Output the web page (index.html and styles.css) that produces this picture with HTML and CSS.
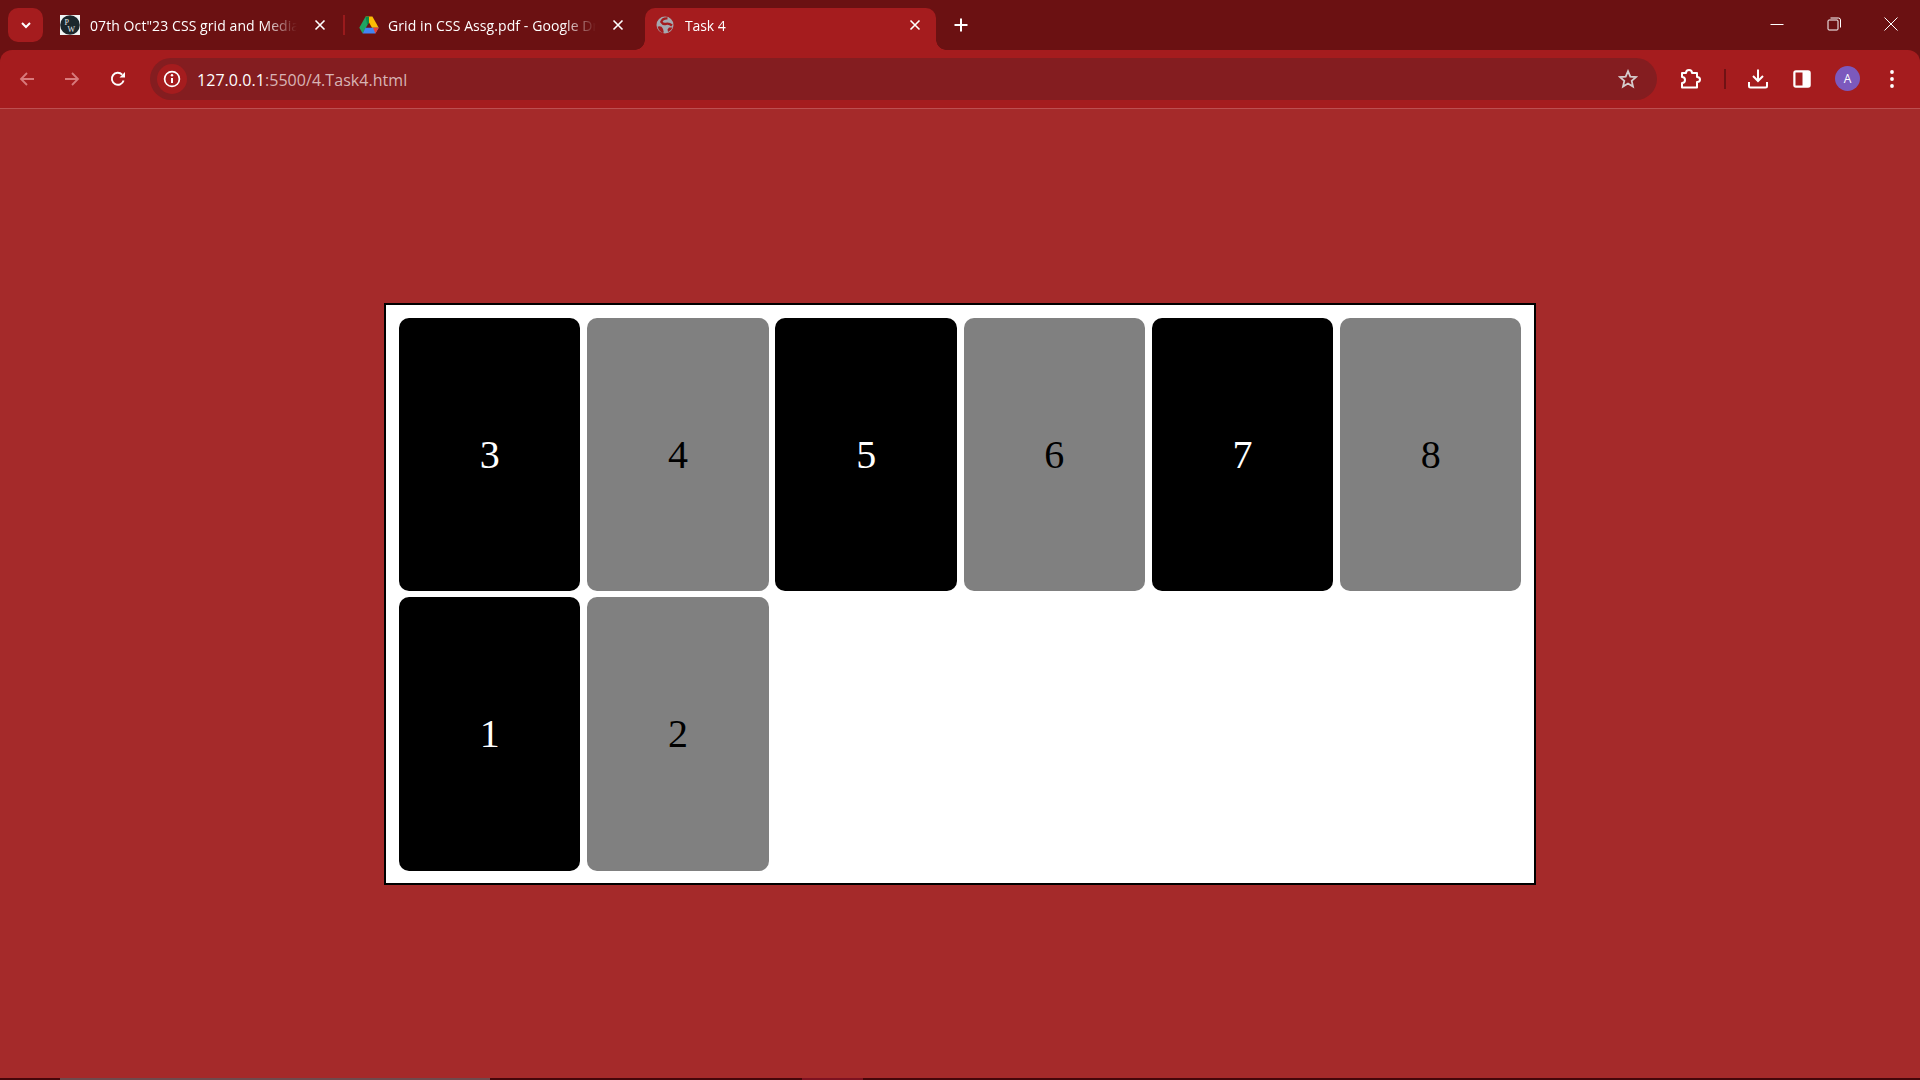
FILE: index.html
```html
<!DOCTYPE html>
<html lang="en">
<head>
<meta charset="utf-8">
<title>Task 4</title>
<link rel="stylesheet" href="styles.css">
</head>
<body>
<div class="browser">
  <header class="tabstrip">
    <button class="tabsearch" aria-label="Search tabs">
      <svg width="12" height="12" viewBox="0 0 12 12"><path d="M2 4 L6 8 L10 4" fill="none" stroke="#fff" stroke-width="2"/></svg>
    </button>
    <div class="tab tab-one">
      <svg class="favicon" width="20" height="20" viewBox="0 0 20 20"><rect width="20" height="20" fill="#f2f4f4"/><circle cx="10" cy="10" r="9.800" fill="#1b272c"/><text class="pw" x="4.500" y="10">P</text><text class="pw" x="7.500" y="16.500">W</text></svg>
      <span class="title">07th Oct"23 CSS grid and Media Queries</span>
      <svg class="close" width="12" height="12" viewBox="0 0 12 12"><path d="M1.5 1.5 L10.5 10.5 M10.5 1.5 L1.5 10.5" stroke="#fff" stroke-width="1.6"/></svg>
      <i class="tabsep"></i>
    </div>
    <div class="tab tab-two">
      <svg class="favicon" width="20" height="18" viewBox="0 0 20 18"><path d="M6.600 0.500 H13.400 L19.700 11.800 H13 Z" fill="#fbbc04"/><path d="M6.600 0.500 L0.300 11.800 L3.700 17.500 L10 6.300 Z" fill="#1fa463"/><path d="M6.600 0.500 H10 L10 6.300 L8.300 9.300 Z" fill="#0d8a4b"/><path d="M6.500 11.800 H19.700 L16.400 17.500 H3.700 Z" fill="#4285f4"/><path d="M14 11.800 H19.700 L16.400 17.500 Z" fill="#ea4335"/></svg>
      <span class="title">Grid in CSS Assg.pdf - Google Drive</span>
      <svg class="close" width="12" height="12" viewBox="0 0 12 12"><path d="M1.5 1.5 L10.5 10.5 M10.5 1.5 L1.5 10.5" stroke="#fff" stroke-width="1.6"/></svg>
    </div>
    <div class="tab tab-active">
      <svg class="favicon" width="18" height="18" viewBox="0 0 18 18"><circle cx="9" cy="9" r="8.500" fill="#a5a9b0"/><path d="M11.500 2.300 Q6.500 2 5.300 5.800 Q7 8.600 10 7.800 Q13 7 16 9.500" fill="none" stroke="#a51c1e" stroke-width="2.300"/><path d="M1.500 10.800 Q3.500 9.500 5.500 10.800 Q7.500 12.500 7.800 16.500 L6 17 Q2.500 15 1.500 10.800 Z" fill="#a51c1e"/><path d="M16.500 11.500 L13 11.500 L11.500 13.500 L12 16 Q15 15 16.500 11.500 Z" fill="#a51c1e"/></svg>
      <span class="title">Task 4</span>
      <svg class="close" width="12" height="12" viewBox="0 0 12 12"><path d="M1.5 1.5 L10.5 10.5 M10.5 1.5 L1.5 10.5" stroke="#fff" stroke-width="1.6"/></svg>
    </div>
    <svg class="newtab" width="14" height="14" viewBox="0 0 14 14"><path d="M7 .5 V13.5 M.5 7 H13.5" stroke="#fff" stroke-width="2"/></svg>
    <div class="winctl">
      <svg width="14" height="14" viewBox="0 0 14 14"><path d="M.5 7.5 H13.5" stroke="#fff" stroke-width="1"/></svg>
      <svg width="14" height="14" viewBox="0 0 14 14"><rect x="1" y="3" width="10" height="10" rx="1" fill="none" stroke="#fff" stroke-width="1"/><path d="M3.500 1 H11.500 Q13.500 1 13.500 3 V10.500" fill="none" stroke="#fff" stroke-width="1"/></svg>
      <svg width="14" height="14" viewBox="0 0 14 14"><path d="M.5 .5 L13.5 13.5 M13.5 .5 L.5 13.5" stroke="#fff" stroke-width="1"/></svg>
    </div>
  </header>
  <nav class="toolbar">
    <svg class="nav-icon dim" width="16" height="16" viewBox="0 0 16 16"><path d="M15 8 H2 M8 2 L2 8 L8 14" fill="none" stroke="#d87a7c" stroke-width="1.800"/></svg>
    <svg class="nav-icon dim" width="16" height="16" viewBox="0 0 16 16"><path d="M1 8 H14 M8 2 L14 8 L8 14" fill="none" stroke="#d87a7c" stroke-width="1.800"/></svg>
    <svg class="nav-icon" width="16" height="16" viewBox="0 0 16 16"><path d="M13.600 9.500 A6 6 0 1 1 12.200 3.600" fill="none" stroke="#fff" stroke-width="1.900"/><path d="M9.500 6.500 H15 V1 Z" fill="#fff"/></svg>
    <div class="omnibox">
      <span class="siteinfo">
        <svg width="18" height="18" viewBox="0 0 18 18"><circle cx="9" cy="9" r="7.400" fill="none" stroke="#fff" stroke-width="1.700"/><path d="M9 8 V13" stroke="#fff" stroke-width="2"/><circle cx="9" cy="5.300" r="1.200" fill="#fff"/></svg>
      </span>
      <span class="url"><b>127.0.0.1</b>:5500/4.Task4.html</span>
      <svg class="star" width="20" height="20" viewBox="0 0 20 20"><path d="M10 2.200 L12.300 7.600 L18 8.100 L13.700 11.900 L15 17.600 L10 14.600 L5 17.600 L6.300 11.900 L2 8.100 L7.700 7.600 Z" fill="none" stroke="#d5cccc" stroke-width="1.800"/></svg>
    </div>
    <svg class="puzzle" width="22" height="20" viewBox="0 0 22 20"><path d="M2 4 H6 Q6 1 9 1 Q12 1 12 4 H17 V8 Q20 8 20 10.500 Q20 13 17 13 V18.500 H2 V14 Q5 14 5 11 Q5 8 2 8 Z" fill="none" stroke="#fff" stroke-width="2" stroke-linejoin="round"/></svg>
    <i class="toolsep"></i>
    <svg class="download" width="20" height="20" viewBox="0 0 20 20"><path d="M10 0.500 V11 M5 7 L10 12 L15 7" fill="none" stroke="#fff" stroke-width="2"/><path d="M1 13 V17 Q1 18.500 2.500 18.500 H17.500 Q19 18.500 19 17 V13" fill="none" stroke="#fff" stroke-width="2"/></svg>
    <svg class="panel" width="18" height="18" viewBox="0 0 18 18"><rect x="1" y="1" width="16" height="16" rx="2" fill="#fff" stroke="#fff" stroke-width="1.500"/><rect x="2.500" y="2.500" width="7" height="13" fill="#a51c1e"/></svg>
    <span class="avatar">A</span>
    <svg class="dots" width="4" height="18" viewBox="0 0 4 18"><circle cx="2" cy="2" r="1.900" fill="#fff"/><circle cx="2" cy="9" r="1.900" fill="#fff"/><circle cx="2" cy="16" r="1.900" fill="#fff"/></svg>
  </nav>
  <main class="page">
    <section class="frame">
      <div class="cell odd">3</div>
      <div class="cell even">4</div>
      <div class="cell odd">5</div>
      <div class="cell even">6</div>
      <div class="cell odd">7</div>
      <div class="cell even">8</div>
      <div class="cell odd">1</div>
      <div class="cell even">2</div>
    </section>
  </main>
  <footer class="taskbar">
    <i class="seg seg-grey"></i>
    <i class="seg seg-red"></i>
  </footer>
</div>
</body>
</html>
```

FILE: styles.css
```css
* { box-sizing: border-box; }
html, body { margin: 0; height: 100%; overflow: hidden; }
body { font-family: "Open Sans", "Noto Sans", sans-serif; }

.browser { display: flex; flex-direction: column; height: 1080px; background: #6b1112; }

.tabstrip { display: flex; align-items: flex-start; height: 50px; padding-left: 8px; flex: none; color: #fff; font-size: 14px; letter-spacing: .08px; }
.tabsearch { width: 35px; height: 34px; margin-top: 8px; margin-right: 5px; border: 0; padding: 0; border-radius: 10px; background: #a51c1e; display: flex; align-items: center; justify-content: center; }

.tab { position: relative; height: 42px; margin-top: 8px; padding-bottom: 8px; display: flex; align-items: center; flex: none; }
.tab-one { width: 297px; padding-left: 12px; }
.tab-two { width: 300px; padding-left: 14px; }
.tab-active { width: 291px; padding-left: 11px; background: #a51c1e; border-radius: 10px 10px 0 0; }
.tab-active::before, .tab-active::after { content: ""; position: absolute; bottom: 0; width: 10px; height: 10px; }
.tab-active::before { left: -10px; background: radial-gradient(circle at 0 0, transparent 9.5px, #a51c1e 10px); }
.tab-active::after { right: -10px; background: radial-gradient(circle at 100% 0, transparent 9.5px, #a51c1e 10px); }

.favicon { flex: none; }
.pw { font-family: "Liberation Serif", serif; font-size: 8px; fill: #e4e8e8; }
.title { margin-left: 10px; width: 207px; white-space: nowrap; overflow: hidden; flex: none; -webkit-mask-image: linear-gradient(to right, #000 84%, transparent 100%); mask-image: linear-gradient(to right, #000 84%, transparent 100%); }
.tab-two .title { margin-left: 9px; width: 208px; }
.tab-active .title { margin-left: 11px; letter-spacing: -.1px; }
.close { margin-left: auto; margin-right: 15px; flex: none; }
.tab-one .close { margin-right: 19px; }
.tab-two .close { margin-right: 21px; }
.tabsep { position: absolute; right: 0; top: 7px; width: 2px; height: 20px; background: #9a1a1c; }

.newtab { margin: 18px 0 0 18px; flex: none; }
.winctl { margin-left: auto; height: 50px; display: flex; align-items: flex-start; gap: 43px; padding: 17px 22px 0 0; }

.toolbar { height: 59px; flex: none; background: #a51c1e; border-radius: 12px 12px 0 0; border-bottom: 1px solid #bd4f50; display: flex; align-items: center; padding: 0 26px 1px 19px; }
.nav-icon { flex: none; margin-right: 29px; }
.nav-icon:nth-child(2) { margin-right: 30px; }
.nav-icon:nth-child(3) { margin-right: 24px; }
.omnibox { width: 1507px; height: 42px; border-radius: 21px; background: #841d20; display: flex; align-items: center; padding: 0 19px 0 7px; flex: none; }
.siteinfo { width: 30px; height: 30px; border-radius: 50%; background: #a51c1e; display: flex; align-items: center; justify-content: center; flex: none; }
.url { margin-left: 10px; padding-top: 2px; font-size: 16px; letter-spacing: .05px; color: #d8b4b5; white-space: nowrap; }
.url b { font-weight: 400; color: #fff; }
.star { margin-left: auto; flex: none; }
.puzzle { margin-left: 23px; flex: none; }
.toolsep { width: 2px; height: 20px; background: #701214; margin-left: 22px; flex: none; }
.download { margin-left: 22px; flex: none; }
.panel { margin-left: 25px; flex: none; }
.avatar { margin-left: 24px; width: 25px; height: 25px; border-radius: 50%; background: #7c59bd; color: #fff; font-size: 12px; display: flex; align-items: center; justify-content: center; flex: none; }
.dots { margin-left: 30px; flex: none; }

.page { flex: 1; background: #a52a2a; display: flex; align-items: center; justify-content: center; }
.frame { width: 1152px; height: 582px; border: 2px solid #000; background: #fff; display: grid; grid-template-columns: repeat(6, 1fr); grid-template-rows: repeat(2, 1fr); gap: 6px 6.8px; padding: 13px 12.5px 12px 13px; }
.cell { border-radius: 10px; display: flex; align-items: center; justify-content: center; font-family: "Liberation Serif", serif; font-size: 40px; }
.odd { background: #000; color: #fff; }
.even { background: #808080; color: #000; }

.taskbar { height: 2px; flex: none; background: #45060a; position: relative; }
.seg { position: absolute; top: 0; height: 2px; }
.seg-grey { left: 60px; width: 430px; background: #6f4a4d; }
.seg-red { left: 802px; width: 61px; background: #7d1220; }
```
